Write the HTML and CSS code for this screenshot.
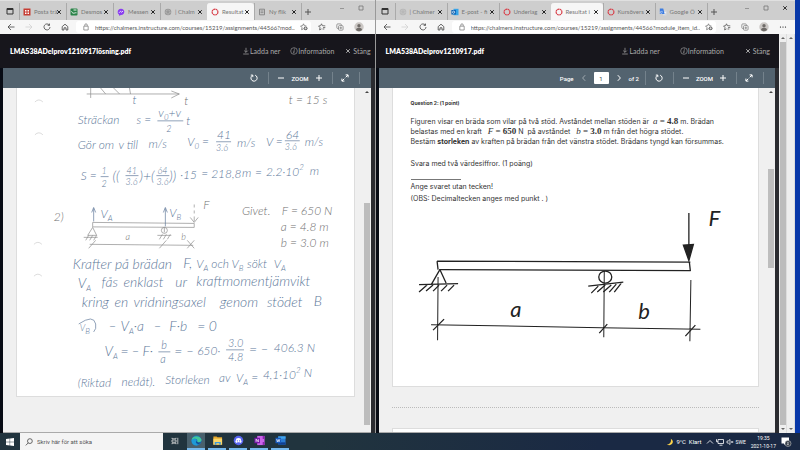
FILE: index.html
```
<!DOCTYPE html>
<html lang="sv">
<head>
    <meta charset="UTF-8">
    <meta name="viewport" content="width=device-width, initial-scale=1.0">
    <title>LMA538ADelprov1210917</title>
    <link rel="stylesheet" href="styles.css">
</head>
<body>
    <!-- shared icons -->
    <svg class="sprite" aria-hidden="true">
        <symbol id="i-tabs" viewBox="0 0 8 8"><path d="M1 1.5h6v5.500h-6z" fill="none" stroke="#333" stroke-width="1"/><path d="M1 2.200h6" stroke="#333" stroke-width="1.600"/></symbol>
        <symbol id="i-x" viewBox="0 0 8 8"><path d="M2.200 2.200l3.600 3.600M5.800 2.200L2.200 5.800" stroke="currentColor" stroke-width="1"/></symbol>
        <symbol id="i-plus" viewBox="0 0 8 8"><path d="M1 4h6M4 1v6" stroke="currentColor" stroke-width="1"/></symbol>
        <symbol id="i-minus" viewBox="0 0 8 8"><path d="M1 4h6" stroke="currentColor" stroke-width="1"/></symbol>
        <symbol id="i-min" viewBox="0 0 8 8"><path d="M2 4.500h4" stroke="#888" stroke-width=".8"/></symbol>
        <symbol id="i-max" viewBox="0 0 8 8"><path d="M2 2h4v4h-4z" fill="none" stroke="#777" stroke-width=".8"/></symbol>
        <symbol id="i-back" viewBox="0 0 8 8"><path d="M7.500 4H1M4 1L1 4l3 3" fill="none" stroke="currentColor" stroke-width=".8"/></symbol>
        <symbol id="i-reload" viewBox="0 0 8 8"><path d="M6.300 2A3 3 0 1 0 7 4M6.500 .6v1.800H4.700" fill="none" stroke="currentColor" stroke-width=".8"/></symbol>
        <symbol id="i-home" viewBox="0 0 8 8"><path d="M1.200 3.600L4 1.200l2.800 2.400v3.400H5V4.800H3V7H1.200z" fill="none" stroke="currentColor" stroke-width=".8"/></symbol>
        <symbol id="i-lock" viewBox="0 0 8 8"><path d="M1.800 3.200h4.400v3.800H1.800zM2.800 3V2a1.200 1.200 0 0 1 2.400 0v1" fill="none" stroke="#777" stroke-width=".7"/></symbol>
        <symbol id="i-staradd" viewBox="0 0 8 8"><path d="M3.500 5.800L1.600 6.700l.4-2.100L.6 3l2-.3.9-1.900.9 1.900 2 .3" fill="none" stroke="#666" stroke-width=".7"/><circle cx="5.600" cy="5.300" r="1.900" fill="#666"/><path d="M4.500 5.300h2.200M5.600 4.200v2.200" stroke="#fff" stroke-width=".6"/></symbol>
        <symbol id="i-fav" viewBox="0 0 8 8"><path d="M3.500 5.900L1.600 6.900l.4-2.300L.6 3l2-.3.9-1.900.9 1.900 2.900.2M5 4.600h2.300M4.500 6h1.800" fill="none" stroke="#555" stroke-width=".8"/></symbol>
        <symbol id="i-coll" viewBox="0 0 8 8"><rect x=".8" y=".9" width="4.600" height="4.600" rx="1" fill="none" stroke="#777" stroke-width=".7"/><rect x="2.500" y="2.600" width="4.600" height="4.600" rx="1" fill="#f6f6f6" stroke="#777" stroke-width=".7"/><path d="M3.500 4.900h2.600M4.800 3.600v2.600" stroke="#777" stroke-width=".7"/></symbol>
        <symbol id="i-user" viewBox="0 0 10 10"><circle cx="5" cy="5" r="4.700" fill="#cbc7c4"/><circle cx="5" cy="3.700" r="1.700" fill="#6f6b68"/><path d="M2 8c0-3 6-3 6 0-2 1.600-4 1.600-6 0z" fill="#6f6b68"/></symbol>
        <symbol id="i-dots" viewBox="0 0 8 8"><circle cx="1.500" cy="4" r=".6"/><circle cx="4" cy="4" r=".6"/><circle cx="6.500" cy="4" r=".6"/></symbol>
        <symbol id="i-download" viewBox="0 0 8 8"><path d="M4 .8v4.400M2.200 3.600L4 5.400l1.800-1.800M1.200 7h5.600" fill="none" stroke="currentColor" stroke-width=".7"/></symbol>
        <symbol id="i-info" viewBox="0 0 8 8"><circle cx="4" cy="4" r="3.300" fill="none" stroke="currentColor" stroke-width=".6"/><path d="M4.400 1.700v.9M4.200 3.300L3.700 6.200" stroke="currentColor" stroke-width=".8"/></symbol>
        <symbol id="i-rotate" viewBox="0 0 8 8"><path d="M2.300 1.500A3.100 3.100 0 1 0 5.200 1.200M.8 1.100h2v2" fill="none" stroke="currentColor" stroke-width="1"/></symbol>
        <symbol id="i-full" viewBox="0 0 8 8"><path d="M4.700 3.300L7 1M4.600 .9h2.500v2.500M3.300 4.700L1 7M3.400 7.100H.9V4.600" fill="none" stroke="currentColor" stroke-width="1"/></symbol>
        <symbol id="i-left" viewBox="0 0 8 8"><path d="M5.200 1.200L2.600 4l2.600 2.800" fill="none" stroke="currentColor" stroke-width=".9"/></symbol>
        <symbol id="i-right" viewBox="0 0 8 8"><path d="M2.800 1.200L5.400 4 2.800 6.800" fill="none" stroke="currentColor" stroke-width="1"/></symbol>
        <symbol id="i-canvas" viewBox="0 0 8 8"><circle cx="4" cy="4" r="2.900" fill="none" stroke="#d8404a" stroke-width="1.200" stroke-dasharray="1.900 .4"/></symbol>
        <symbol id="i-chalmers" viewBox="0 0 8 8"><circle cx="4" cy="4" r="3.300" fill="#999"/><circle cx="4" cy="4" r="2" fill="none" stroke="#ddd" stroke-width=".6" stroke-dasharray="1 .6"/></symbol>
    </svg>

    <div class="desktop">
        <main class="windows">
            <section class="window window-left">
                <div class="tabs">
                    <button class="tab-menu" aria-label="Flikar"><svg><use href="#i-tabs"/></svg></button>
                    <div class="tab">
                        <svg viewBox="0 0 8 8"><path d="M.5.5h7v7h-7z" fill="#c63c33"/><path d="M2 2h1.500v1.500H2zM4.500 2H6v1.500H4.500zM2 4.500h1.500V6H2zM4.500 4.500H6V6H4.500z" fill="#fff"/></svg>
                        <span>Posta trå</span><button aria-label="Stäng flik"><svg><use href="#i-x"/></svg></button>
                    </div>
                    <div class="tab">
                        <svg viewBox="0 0 8 8"><rect x=".5" y=".5" width="7" height="7" rx="1" fill="#2a8348"/><path d="M1.500 3.300c1.500 3.500 3.500 1 5 1.500M3.500 2h3" fill="none" stroke="#fff" stroke-width=".9"/></svg>
                        <span>Desmos</span><button aria-label="Stäng flik"><svg><use href="#i-x"/></svg></button>
                    </div>
                    <div class="tab">
                        <svg viewBox="0 0 8 8"><path d="M4 .7c4.400 0 4.400 6.300 0 6.300L2 7.700V6.500C-.5 4.500.8.700 4 .7z" fill="#8a3df0"/><path d="M2 4.800l1.500-1.500 1 .9L6 3.100" fill="none" stroke="#fff" stroke-width=".8"/></svg>
                        <span>Messen</span><button aria-label="Stäng flik"><svg><use href="#i-x"/></svg></button>
                    </div>
                    <div class="tab">
                        <svg><use href="#i-chalmers"/></svg>
                        <span>| Chalm</span><button aria-label="Stäng flik"><svg><use href="#i-x"/></svg></button>
                    </div>
                    <div class="tab active">
                        <svg><use href="#i-canvas"/></svg>
                        <span>Resultat</span><button aria-label="Stäng flik"><svg><use href="#i-x"/></svg></button>
                    </div>
                    <div class="tab">
                        <svg viewBox="0 0 8 8"><path d="M1.500 1.200h5v5.600h-5zM2.500 3h3M2.500 4.700h3" fill="none" stroke="#777" stroke-width=".8"/></svg>
                        <span>Ny flik</span><button aria-label="Stäng flik"><svg><use href="#i-x"/></svg></button>
                    </div>
                    <button class="new-tab" aria-label="Ny flik"><svg><use href="#i-plus"/></svg></button>
                    <div class="controls">
                        <button aria-label="Minimera"><svg><use href="#i-min"/></svg></button>
                        <button aria-label="Maximera"><svg><use href="#i-max"/></svg></button>
                    </div>
                </div>
                <div class="address-row">
                    <div class="nav">
                        <button aria-label="Bakåt"><svg><use href="#i-back"/></svg></button>
                        <button aria-label="Framåt" class="flip"><svg><use href="#i-back"/></svg></button>
                        <button aria-label="Uppdatera"><svg><use href="#i-reload"/></svg></button>
                        <button aria-label="Startsida"><svg><use href="#i-home"/></svg></button>
                    </div>
                    <div class="address">
                        <svg><use href="#i-lock"/></svg>
                        <input type="text" aria-label="Adress" value="https://chalmers.instructure.com/courses/15219/assignments/44566?mod...">
                        <button aria-label="Lägg till favorit"><svg><use href="#i-staradd"/></svg></button>
                    </div>
                    <div class="nav">
                        <button aria-label="Favoriter"><svg><use href="#i-fav"/></svg></button>
                        <button aria-label="Samlingar"><svg><use href="#i-coll"/></svg></button>
                        <button aria-label="Profil"><svg class="avatar"><use href="#i-user"/></svg></button>
                    </div>
                </div>
                <header class="doc-header">
                    <h1>LMA538ADelprov1210917lösning.pdf</h1>
                    <div class="doc-actions">
                        <a href="#"><svg><use href="#i-download"/></svg>Ladda ner</a>
                        <a href="#"><svg><use href="#i-info"/></svg>Information</a>
                        <button class="close-doc"><svg><use href="#i-x"/></svg>Stäng</button>
                    </div>
                </header>
                <div class="viewer">
                    <div class="toolbar">
                        <button aria-label="Rotera"><svg><use href="#i-rotate"/></svg></button>
                        <div class="zoom">
                            <button aria-label="Zooma ut"><svg><use href="#i-minus"/></svg></button>
                            <span>ZOOM</span>
                            <button aria-label="Zooma in"><svg><use href="#i-plus"/></svg></button>
                        </div>
                        <button class="full" aria-label="Helskärm"><svg><use href="#i-full"/></svg></button>
                    </div>
                    <div class="pages">
                        <article class="sheet">
                            <!-- handwritten solution -->
                            <svg class="notes" viewBox="17 88 338 309">
                                <g class="pencil">
                                    <path d="M87 94h93M172 91l8 3-8 4M91 88v10M101 88l5 6M114 88l6 6M130 88l1 6"/>
                                    <path class="faint" d="M35 102q4-4 8 0M35 135q4-4 8 0M34 245q4-4 8 0M34 277q4-4 8 0"/>
                                    <path d="M93 223l102 1v4l-102-.500zM93 228l-5 8h9zM84 238h14M86 241l3-5M90 241l3-5M94 241l3-5M165 228v5M158 236h14M160 240l3-5M164 240l3-5M168 240l3-5M195 205v3M195 211v3M195 217v5M191 218l4 5 4-5"/>
                                    <circle cx="165" cy="231" r="3"/>
                                    <path d="M90 245l104 1M89 249l7-8M160 249l7-8M188 249l7-8M188 241l7 8"/>
                                </g>
                                <g class="ink-line">
                                    <path d="M94 222v-13M92 213l2-5 2 5M166 227v-18M164 213l2-5 2 5"/>
                                    <path d="M158 121h26M217 142h15M286 141h15M101 177h8M126 176h13M157 176h13M159 353h12M227 351h18"/>
                                    <path d="M79 325q15-10 17 0q1 5-2 8"/>
                                </g>
                                <g class="ink">
                                    <text x="133" y="104">t</text>
                                    <text x="78" y="124">Sträckan</text>
                                    <text x="137" y="124">s =</text>
                                    <text x="159" y="117">v<tspan class="sub">0</tspan>+v</text>
                                    <text x="167" y="132" class="small">2</text>
                                    <text x="187" y="125">t</text>
                                    <text x="78" y="149">Gör</text>
                                    <text x="99" y="149">om</text>
                                    <text x="119" y="149">v till</text>
                                    <text x="149" y="148">m/s</text>
                                    <text x="188" y="146">V<tspan class="sub">0</tspan> =</text>
                                    <text x="218" y="139">41</text>
                                    <text x="217" y="151" class="small">3.6</text>
                                    <text x="238" y="147">m/s</text>
                                    <text x="267" y="146">V =</text>
                                    <text x="287" y="139">64</text>
                                    <text x="286" y="150" class="small">3.6</text>
                                    <text x="306" y="146">m/s</text>
                                    <text x="81" y="180">S =</text>
                                    <text x="102" y="174" class="small">1</text>
                                    <text x="102" y="187" class="small">2</text>
                                    <text x="113" y="181" class="large">((</text>
                                    <text x="127" y="174" class="small">41</text>
                                    <text x="126" y="185" class="small">3.6</text>
                                    <text x="140" y="181" class="large">)+(</text>
                                    <text x="158" y="174" class="small">64</text>
                                    <text x="157" y="185" class="small">3.6</text>
                                    <text x="170" y="181" class="large">))</text>
                                    <text x="181" y="179">·15</text>
                                    <text x="202" y="178">=</text>
                                    <text x="212" y="178">218,8</text>
                                    <text x="243" y="177">m</text>
                                    <text x="256" y="177">=</text>
                                    <text x="267" y="176">2.2·10<tspan class="sup">2</tspan></text>
                                    <text x="311" y="175">m</text>
                                    <text x="101" y="219">V<tspan class="sub">A</tspan></text>
                                    <text x="170" y="218">V<tspan class="sub">B</tspan></text>
                                    <text x="73" y="270" class="large">Krafter på brädan</text>
                                    <text x="184" y="269" class="large">F,</text>
                                    <text x="197" y="269">V<tspan class="sub">A</tspan> och V<tspan class="sub">B</tspan></text>
                                    <text x="248" y="269">sökt</text>
                                    <text x="275" y="269">V<tspan class="sub">A</tspan></text>
                                    <text x="78" y="289" class="large">V<tspan class="sub">A</tspan></text>
                                    <text x="102" y="288" class="large">fås</text>
                                    <text x="124" y="288" class="large">enklast</text>
                                    <text x="176" y="288" class="large">ur</text>
                                    <text x="197" y="287" class="large">kraftmomentjämvikt</text>
                                    <text x="82" y="308" class="large">kring</text>
                                    <text x="115" y="308" class="large">en</text>
                                    <text x="134" y="308" class="large">vridningsaxel</text>
                                    <text x="221" y="308" class="large">genom</text>
                                    <text x="268" y="308" class="large">stödet</text>
                                    <text x="315" y="307" class="large">B</text>
                                    <text x="80" y="332" class="small">V<tspan class="sub">B</tspan></text>
                                    <text x="109" y="332" class="large">–</text>
                                    <text x="121" y="332" class="large">V<tspan class="sub">A</tspan>·a</text>
                                    <text x="154" y="332" class="large">–</text>
                                    <text x="170" y="332" class="large">F·b</text>
                                    <text x="198" y="332" class="large">= 0</text>
                                    <text x="105" y="357" class="large">V<tspan class="sub">A</tspan></text>
                                    <text x="121" y="357" class="large">=</text>
                                    <text x="132" y="357" class="large">–</text>
                                    <text x="143" y="357" class="large">F·</text>
                                    <text x="162" y="350" class="medium">b</text>
                                    <text x="161" y="364" class="medium">a</text>
                                    <text x="175" y="357" class="large">= –</text>
                                    <text x="198" y="356">650·</text>
                                    <text x="229" y="348" class="medium">3.0</text>
                                    <text x="229" y="362" class="medium">4.8</text>
                                    <text x="250" y="355" class="large">= –</text>
                                    <text x="275" y="353">406.3 N</text>
                                    <text x="78" y="388">(Riktad</text>
                                    <text x="122" y="387">nedåt).</text>
                                    <text x="166" y="385">Storleken</text>
                                    <text x="220" y="383">av</text>
                                    <text x="237" y="383">V<tspan class="sub">A</tspan> =</text>
                                    <text x="264" y="380">4,1·10<tspan class="sup">2</tspan></text>
                                    <text x="305" y="378">N</text>
                                </g>
                                <g class="lead">
                                    <text x="185" y="105">t</text>
                                    <text x="290" y="104">t = 15 s</text>
                                    <text x="54" y="222">2)</text>
                                    <text x="204" y="210">F</text>
                                    <text x="126" y="241" class="small">a</text>
                                    <text x="182" y="241" class="small">b</text>
                                    <text x="243" y="216">Givet.</text>
                                    <text x="283" y="216">F = 650 N</text>
                                    <text x="282" y="232">a = 4.8 m</text>
                                    <text x="282" y="248">b = 3.0 m</text>
                                </g>
                            </svg>
                        </article>
                        <div class="scroll scroll-left"><i></i></div>
                    </div>
                </div>
            </section>

            <section class="window window-right">
                <div class="tabs">
                    <button class="tab-menu" aria-label="Flikar"><svg><use href="#i-tabs"/></svg></button>
                    <div class="tab">
                        <svg class="faded"><use href="#i-chalmers"/></svg>
                        <span>| Chalmer</span><button aria-label="Stäng flik"><svg><use href="#i-x"/></svg></button>
                    </div>
                    <div class="tab">
                        <svg viewBox="0 0 8 8"><path d="M2.500.8h5v6.400h-5z" fill="#36a3e8"/><path d="M.4 2h4.500v4.500H.4z" fill="#0b62b5"/><circle cx="2.600" cy="4.200" r="1.100" fill="none" stroke="#fff" stroke-width=".7"/></svg>
                        <span>E-post - fi</span><button aria-label="Stäng flik"><svg><use href="#i-x"/></svg></button>
                    </div>
                    <div class="tab">
                        <svg><use href="#i-canvas"/></svg>
                        <span>Underlag</span><button aria-label="Stäng flik"><svg><use href="#i-x"/></svg></button>
                    </div>
                    <div class="tab active">
                        <svg><use href="#i-canvas"/></svg>
                        <span>Resultat i</span><button aria-label="Stäng flik"><svg><use href="#i-x"/></svg></button>
                    </div>
                    <div class="tab">
                        <svg><use href="#i-canvas"/></svg>
                        <span>Kursövers</span><button aria-label="Stäng flik"><svg><use href="#i-x"/></svg></button>
                    </div>
                    <div class="tab">
                        <svg viewBox="0 0 8 8"><path d="M3 2.500h4.500v5H4z" fill="#d5d9df"/><path d="M.8.600h3.400l1.600 5.400h-5z" fill="#3d7ce0"/><path d="M3.700 3.400H2.300a1 1 0 1 0 1 1M5.200 4.500h2M6.200 4c0 1.200-.5 2-1 2.400" fill="none" stroke="#fff" stroke-width=".5"/></svg>
                        <span>Google Ö</span><button aria-label="Stäng flik"><svg><use href="#i-x"/></svg></button>
                    </div>
                    <button class="new-tab" aria-label="Ny flik"><svg><use href="#i-plus"/></svg></button>
                    <div class="controls">
                        <button aria-label="Minimera"><svg><use href="#i-min"/></svg></button>
                        <button aria-label="Maximera"><svg><use href="#i-max"/></svg></button>
                        <button aria-label="Stäng"><svg><use href="#i-x"/></svg></button>
                    </div>
                </div>
                <div class="address-row">
                    <div class="nav">
                        <button aria-label="Bakåt"><svg><use href="#i-back"/></svg></button>
                        <button aria-label="Framåt" class="flip"><svg><use href="#i-back"/></svg></button>
                        <button aria-label="Uppdatera"><svg><use href="#i-reload"/></svg></button>
                        <button aria-label="Startsida"><svg><use href="#i-home"/></svg></button>
                    </div>
                    <div class="address">
                        <svg><use href="#i-lock"/></svg>
                        <input type="text" aria-label="Adress" value="https://chalmers.instructure.com/courses/15219/assignments/44566?module_item_id...">
                        <button aria-label="Lägg till favorit"><svg><use href="#i-staradd"/></svg></button>
                    </div>
                    <div class="nav">
                        <button aria-label="Favoriter"><svg><use href="#i-fav"/></svg></button>
                        <button aria-label="Samlingar"><svg><use href="#i-coll"/></svg></button>
                        <button aria-label="Profil"><svg class="avatar"><use href="#i-user"/></svg></button>
                        <button aria-label="Meny"><svg><use href="#i-dots"/></svg></button>
                    </div>
                </div>
                <div class="window-body">
                    <div class="document">
                        <header class="doc-header">
                            <h1>LMA538ADelprov1210917.pdf</h1>
                            <div class="doc-actions">
                                <a href="#"><svg><use href="#i-download"/></svg>Ladda ner</a>
                                <a href="#"><svg><use href="#i-info"/></svg>Information</a>
                                <button class="close-doc"><svg><use href="#i-x"/></svg>Stäng</button>
                            </div>
                        </header>
                        <div class="viewer">
                            <div class="toolbar">
                                <div class="pager">
                                    <label for="page">Page</label>
                                    <button aria-label="Föregående sida" class="dim"><svg><use href="#i-left"/></svg></button>
                                    <input type="text" id="page" value="1">
                                    <button aria-label="Nästa sida"><svg><use href="#i-right"/></svg></button>
                                    <span>of 2</span>
                                </div>
                                <button aria-label="Rotera"><svg><use href="#i-rotate"/></svg></button>
                                <div class="zoom">
                                    <button aria-label="Zooma ut"><svg><use href="#i-minus"/></svg></button>
                                    <span>ZOOM</span>
                                    <button aria-label="Zooma in"><svg><use href="#i-plus"/></svg></button>
                                </div>
                                <button class="full" aria-label="Helskärm"><svg><use href="#i-full"/></svg></button>
                            </div>
                            <div class="pages">
                                <div class="sheets">
                                    <article class="sheet question">
                                        <h2>Question 2: (1 point)</h2>
                                        <p>Figuren visar en bräda som vilar på två stöd. Avståndet mellan stöden är &nbsp;<span class="math"><i>a</i> = <b>4.8</b></span> m. Brädan<br>
                                        belastas med en kraft &nbsp; <span class="math"><i>F</i> = <b>650</b></span> N &nbsp;på avståndet &nbsp; <span class="math"><i>b</i> = <b>3.0</b></span> m från det högra stödet.<br>
                                        Bestäm <strong>storleken</strong> av kraften på brädan från det vänstra stödet. Brädans tyngd kan försummas.</p>
                                        <p class="instruction">Svara med två värdesiffror. (1 poäng)</p>
                                        <div class="blank"></div>
                                        <p class="answer">Ange svaret utan tecken!</p>
                                        <p class="answer">(OBS: Decimaltecken anges med punkt . )</p>
                                        <!-- beam on two supports -->
                                        <svg class="beam" viewBox="393 205 365 182">
                                            <path d="M437 262L690 263M437 262l1 8.500M439 270.500l251 1M689 263l1 9"/>
                                            <path d="M439.500 271l-8 14M440 271l6 13M419 285.500l39-1M419 293l8-7M426 292l7-6M433 292l6-6M441 292l6-6M448 292l6-6"/>
                                            <ellipse cx="605" cy="278" rx="6.500" ry="6"/>
                                            <path d="M588 287l35-4M591 294l7-7M597 293l8-7M603 293l8-7M609 293l7-8M614 293l7-9"/>
                                            <path class="thin" d="M438 278l-.500 63M604 272l-.500 66M690.500 281l-1 61M431 325.500l170 3 99 1.500"/>
                                            <path d="M433 331l11-11M599 334l8-9M685 337l10-11"/>
                                            <path d="M688.500 214v34"/>
                                            <path class="head" d="M683 246l10-.500-4.500 16z"/>
                                            <text x="510" y="318">a</text>
                                            <text x="638" y="320">b</text>
                                            <text x="708" y="227">F</text>
                                        </svg>
                                    </article>
                                    <hr>
                                    <div class="next-sheet"></div>
                                </div>
                                <div class="scroll scroll-right"><i></i></div>
                            </div>
                        </div>
                    </div>
                    <div class="outer-scroll dark"><i></i></div>
                    <div class="outer-scroll"><i></i></div>
                </div>
            </section>
        </main>

        <footer class="taskbar">
            <button class="start" aria-label="Start"><svg viewBox="0 0 8 8"><path d="M0 1.100l3.700-.5v3.200H0zM4.100.500L8 0v3.800H4.100zM0 4.200h3.700v3.200L0 6.900zM4.100 4.200H8V8l-3.900-.5z" fill="#fff"/></svg></button>
            <label class="search">
                <svg viewBox="0 0 8 8"><circle cx="4.900" cy="3.100" r="2.400" fill="none" stroke="#444" stroke-width=".8"/><path d="M3.200 4.900L.8 7.400" stroke="#444" stroke-width=".8"/></svg>
                <input type="text" aria-label="Sök" placeholder="Skriv här för att söka">
            </label>
            <button class="app plain" aria-label="Aktivitetsvy"><svg viewBox="0 0 8 8"><path d="M1 .8v1h4v-1M1 7.200v-1h4v1M1 3h4v2.200H1zM6.800.8v6.400" fill="none" stroke="#ddd" stroke-width=".8"/></svg></button>
            <button class="app current" aria-label="Edge"><svg viewBox="0 0 12 12"><circle cx="6" cy="6" r="5.500" fill="#1774c6"/><path d="M.6 6C1 0 10 0 11.400 5c.4 3-3.500 3.500-4.600 2.200C8 4 3.500 2.500.6 6z" fill="#41c79a"/><path d="M.6 6c2-3 5.500-2.300 5.400.2-1 .8-1.500 3.800 2.500 4.700C4 12.500.5 10 .6 6z" fill="#1e9ad8"/><path d="M5.800 6.200c.2 2 3 3 5 1.800-.8 1.500-3.300 2-4.500.8-.7-.8-.8-1.800-.5-2.600z" fill="#123f75"/></svg></button>
            <button class="app" aria-label="Utforskaren"><svg viewBox="0 0 12 12"><path d="M1.500 1.500h3.500l1 1h5v8h-9.500z" fill="#e7a92d"/><path d="M1.500 4h9.500v6.500h-9.500z" fill="#f9d66a"/><path d="M3 10.500v-3h6.500v3h-1.600V9H4.700v1.500z" fill="#3b99d9"/></svg></button>
            <button class="app" aria-label="Discord"><svg viewBox="0 0 12 12"><circle cx="6" cy="6" r="5.200" fill="#5865f2"/><path d="M3.700 3.700q2.300-.8 4.600 0l1.200 4-1.700 1-.6-.8H4.800l-.6.800-1.700-1z" fill="#fff"/><circle cx="4.800" cy="6.300" r=".7" fill="#5865f2"/><circle cx="7.200" cy="6.300" r=".7" fill="#5865f2"/></svg></button>
            <button class="app" aria-label="OneNote"><svg viewBox="0 0 12 12"><path d="M3.500 1h8v10h-8z" fill="#ca64ea"/><path d="M9.500 1h2v3.300h-2zM9.500 7.600h2V11h-2z" fill="#8b25b0"/><path d="M.5 3h6v6h-6z" fill="#7719aa"/><path d="M2.300 7.500v-3l2.400 3v-3" fill="none" stroke="#fff" stroke-width=".8"/></svg></button>
            <button class="app" aria-label="Word"><svg viewBox="0 0 12 12"><path d="M3.500 1.500h8v9h-8z" fill="#2b7cd3"/><path d="M3.500 1.500h8v2.500h-8z" fill="#41a5ee"/><path d="M3.500 8h8v2.500h-8z" fill="#103f91"/><path d="M.5 3h6v6h-6z" fill="#185abd"/><path d="M1.700 4.500l.9 3 .9-2.600.9 2.600.9-3" fill="none" stroke="#fff" stroke-width=".7"/></svg></button>
            <div class="tray">
                <span class="weather"><svg viewBox="0 0 10 10"><path d="M6 .8C11.500 4 7.500 11.500 1 8.200 5 8 7 4.500 6 .8z" fill="#fbd24a"/></svg>9°C &nbsp;Klart</span>
                <svg viewBox="0 0 8 8"><path d="M1 5.500l3-3 3 3" fill="none" stroke="#fff" stroke-width=".8"/></svg>
                <svg viewBox="0 0 8 8"><path d="M2 1.500h5.500v4H2zM3.500 7.200h3M.5 1.200v2.500h1.500" fill="none" stroke="#fff" stroke-width=".8"/></svg>
                <svg viewBox="0 0 8 8"><path d="M1 3h1.200L4 1.500v5L2.200 5H1zM5.200 3l2 2M7.200 3l-2 2" fill="none" stroke="#fff" stroke-width=".7"/></svg>
                <span>SWE</span>
                <time datetime="2021-10-17T19:35">19:35<br>2021-10-17</time>
                <button class="notice" aria-label="Meddelanden"><svg viewBox="0 0 12 12"><path d="M1.500 1.500h7.500v6H5.500L4 9V7.500H1.500z" fill="#fff"/><circle cx="8" cy="7.500" r="3" fill="#333b46" stroke="#ddd" stroke-width=".5"/><path d="M7.200 6.700q.8-.9 1.300 0L7.200 8.600h1.700" fill="none" stroke="#fff" stroke-width=".6"/></svg></button>
            </div>
        </footer>
    </div>
</body>
</html>
```
FILE: styles.css
```
* {
    box-sizing: border-box;
}

body {
    margin: 0;
    font-family: Roboto, "Noto Sans", sans-serif;
    font-size: 6px;
    color: #333;
}

button {
    display: flex;
    align-items: center;
    justify-content: center;
    padding: 0;
    border: none;
    background: none;
    color: inherit;
    font: inherit;
}

input {
    min-width: 0;
    padding: 0;
    border: none;
    outline: none;
    background: none;
    color: inherit;
    font: inherit;
}

svg {
    display: block;
    flex: none;
    width: 8px;
    height: 8px;
}

.sprite {
    position: absolute;
    width: 0;
    height: 0;
}

.desktop {
    display: flex;
    flex-direction: column;
    height: 100vh;
    background: #0838a8;
}

.windows {
    display: flex;
    flex: 1;
    min-height: 0;
    padding-right: 5px;
    overflow: hidden;
}

.window {
    display: flex;
    flex-direction: column;
    min-width: 0;
    overflow: hidden;
    background: #f6f6f6;
}

.window-left {
    flex: 375;
    border-right: 1px solid #999;
}

.window-right {
    flex: 420;
}

/* tab strip */
.tabs {
    display: flex;
    flex: none;
    align-items: flex-end;
    height: 20px;
    background: #cecece;
    border-top: 1px solid #e0e0e0;
}

.tab-menu {
    width: 19px;
    height: 19px;
}

.tab {
    display: flex;
    flex: 0 1 47px;
    align-items: center;
    min-width: 0;
    height: 17px;
    padding: 0 3px;
    border-left: 1px solid #aaa;
    color: #777;
    font-family: Lato, sans-serif;
}

.window-right .tab {
    flex-basis: 52px;
}

.tab span {
    flex: 1;
    min-width: 0;
    margin-left: 3px;
    white-space: nowrap;
}

.tab button {
    color: #222;
}

.tab.active {
    border-color: #f6f6f6;
    border-radius: 3px 3px 0 0;
    background: #f6f6f6;
}

.faded {
    opacity: 0.4;
}

.new-tab {
    width: 13px;
    height: 17px;
    border-left: 1px solid #aaa;
    color: #555;
}

.controls {
    display: flex;
    gap: 11px;
    align-self: center;
    margin-left: auto;
    padding: 0 10px 6px 0;
}

.window-right .controls {
    padding-right: 6px;
}

/* address row */
.address-row {
    display: flex;
    flex: none;
    align-items: center;
    gap: 7px;
    height: 14px;
    padding: 0 11px 0 7px;
    color: #444;
}

.window-right .address-row {
    padding-right: 8px;
}

.nav {
    display: flex;
    align-items: center;
    gap: 10px;
}

.nav .flip {
    transform: scaleX(-1);
    opacity: 0.2;
}

.avatar {
    width: 10px;
    height: 10px;
}

.address {
    display: flex;
    flex: 1;
    align-items: center;
    gap: 5px;
    min-width: 0;
    height: 12px;
    padding: 0 3px 0 6px;
    border-radius: 3px;
    background: #fff;
    color: #555;
    font-family: Lato, sans-serif;
}

.address input {
    flex: 1;
}

/* document header */
.doc-header {
    display: flex;
    flex: none;
    align-items: center;
    justify-content: space-between;
    height: 34px;
    padding: 0 4px 0 10px;
    background: #17161c;
    color: #fff;
    font-family: Lato, sans-serif;
}

.window-right .doc-header {
    padding-right: 9px;
}

.doc-header h1 {
    margin: 0;
    font-size: 7px;
    font-weight: 800;
}

.doc-actions {
    display: flex;
    gap: 10px;
    color: #aaa;
    font-size: 7px;
}

.window-right .doc-actions {
    gap: 20px;
}

.doc-actions a {
    display: flex;
    align-items: center;
    color: inherit;
    text-decoration: none;
}

.close-doc {
    gap: 1px;
}

.window-body {
    display: flex;
    flex: 1;
    min-height: 0;
}

.document {
    display: flex;
    flex: 1;
    flex-direction: column;
    min-width: 0;
}

/* page scrollbars of the browser window */
.outer-scroll {
    display: flex;
    flex-direction: column;
    align-items: center;
    justify-content: space-between;
    width: 8px;
    padding: 3px 0;
    border-right: 1px solid #ddd;
    background: #eee;
}

.outer-scroll i {
    flex: 1;
    width: 6px;
    margin: 3px 0;
    background: #eee;
}

.outer-scroll.dark i {
    background: #bcbcbc;
}

.outer-scroll::before,
.outer-scroll::after {
    content: "";
    border: 2px solid transparent;
    border-top: none;
    border-bottom-color: #666;
}

.outer-scroll::after {
    border-top: 2px solid #666;
    border-bottom: none;
}

/* pdf viewer */
.viewer {
    display: flex;
    flex: 1;
    flex-direction: column;
    min-height: 0;
    border-left: 3px solid #070b14;
    border-right: 4px solid #2a2b30;
}

.toolbar {
    display: flex;
    flex: none;
    align-items: center;
    justify-content: flex-end;
    height: 20px;
    padding-right: 11px;
    background: #53636f;
    color: #fff;
}

.pager,
.zoom {
    display: flex;
    align-items: center;
}

.pager {
    gap: 6px;
    margin-right: 9px;
    padding: 1px 6px 1px 0;
    border-right: 1px solid #74828c;
}

.pager span,
.pager label {
    font-size: 6px;
    font-weight: 500;
}

.pager .dim {
    opacity: 0.5;
}

.pager input {
    width: 15px;
    height: 12px;
    border-radius: 1px;
    background: #fff;
    color: #444;
    text-align: center;
}

.zoom {
    gap: 6px;
    margin-left: 10px;
    padding: 2px 9px 2px 8px;
    border: solid #74828c;
    border-width: 0 1px;
    font-size: 6px;
    font-weight: 500;
}

.full {
    padding: 2px 10px 2px 8px;
    border-right: 1px solid #74828c;
}

.pages {
    display: flex;
    flex: 1;
    align-items: flex-start;
    min-height: 0;
    overflow: hidden;
    padding-left: 13px;
    border-bottom: 1px solid #aaa;
    background: #f0f0f0;
}

.sheet {
    flex: 1;
    min-width: 0;
    border: 1px solid #ddd;
    border-top: none;
    background: #fff;
}

.scroll {
    display: flex;
    flex-direction: column;
    align-items: flex-end;
    align-self: stretch;
    width: 16px;
    padding: 3px 1px 0 0;
}

.scroll::before {
    content: "";
    margin-right: 1px;
    border: 2px solid transparent;
    border-top: none;
    border-bottom-color: #444;
}

.scroll i {
    width: 6px;
    background: #bdbdbd;
}

.scroll-left i {
    height: 222px;
    margin-top: 110px;
}

.scroll-right i {
    height: 99px;
    margin-top: 76px;
}

.notes,
.beam {
    width: 100%;
    height: auto;
    overflow: visible;
}

.notes text {
    font-family: Lato, sans-serif;
    font-size: 12px;
    font-style: italic;
    font-weight: 300;
}

.notes .small {
    font-size: 9px;
}

.notes .medium {
    font-size: 11px;
}

.notes .large {
    font-size: 14px;
}

.notes .sub {
    font-size: 8px;
    baseline-shift: -3px;
}

.notes .sup {
    font-size: 8px;
    baseline-shift: 6px;
}

.ink {
    fill: #60799a;
}

.lead {
    fill: #707070;
}

.pencil,
.ink-line {
    fill: none;
    stroke: #8c8c8c;
    stroke-width: 0.7;
}

.faint {
    stroke: #ccc;
}

.ink-line {
    stroke: #60799a;
}

/* question sheet */
.sheets {
    flex: 1;
    min-width: 0;
}

.question {
    font-family: Inter, "Liberation Sans", Arial, sans-serif;
    font-size: 7px;
    line-height: 10px;
    white-space: nowrap;
}

.question h2 {
    margin: 0 18px;
    padding-top: 10px;
    font-size: 5px;
    line-height: 10px;
}

.question p {
    margin: 9px 18px 0;
}

.question .instruction {
    margin-top: 12px;
}

.question .answer {
    margin-top: 2px;
}

.question .blank {
    width: 50px;
    height: 11px;
    margin-left: 18px;
    border-bottom: 1px solid #777;
}

.math {
    font-family: "Liberation Serif", "Times New Roman", serif;
    font-size: 9px;
    line-height: 1;
}

.beam {
    fill: none;
    stroke: #222;
    stroke-width: 1.3;
}

.beam .thin {
    stroke-width: 1;
}

.beam .head {
    fill: #222;
}

.beam text {
    fill: #222;
    stroke: none;
    font-family: Lato, sans-serif;
    font-size: 22px;
    font-style: italic;
    font-weight: 400;
}

hr {
    margin: 20px 0;
    border: none;
    border-top: 1px dotted #bbb;
}

.next-sheet {
    height: 10px;
    border: 1px solid #ddd;
    background: #fff;
}

/* taskbar */
.taskbar {
    display: flex;
    flex: none;
    height: 17px;
    background: linear-gradient(to right, #21343e 40%, #1a2944 75%);
    color: #fff;
}

.start {
    width: 20px;
}

.search {
    display: flex;
    align-items: center;
    gap: 4px;
    width: 143px;
    padding-left: 5px;
    background: #f4f4f4;
    color: #555;
}

.search input {
    flex: 1;
}

.search input::placeholder {
    color: #555;
}

.app {
    width: 18px;
    margin-left: 3px;
    border-bottom: 2px solid #76b9ed;
}

.app svg {
    width: 11px;
    height: 11px;
}

.app.plain {
    border-color: transparent;
}

.app.plain svg {
    width: 8px;
    height: 8px;
}

.app.current {
    background: #49606c;
}

.tray {
    display: flex;
    align-items: center;
    gap: 2px;
    margin-left: auto;
    padding-right: 8px;
    font-size: 5px;
}

.weather {
    display: flex;
    align-items: center;
    gap: 2px;
    margin-right: 2px;
    font-size: 6px;
}

.tray time {
    margin: 0 2px 0 3px;
    line-height: 8px;
    text-align: center;
}

.notice svg {
    width: 12px;
    height: 12px;
}
```
